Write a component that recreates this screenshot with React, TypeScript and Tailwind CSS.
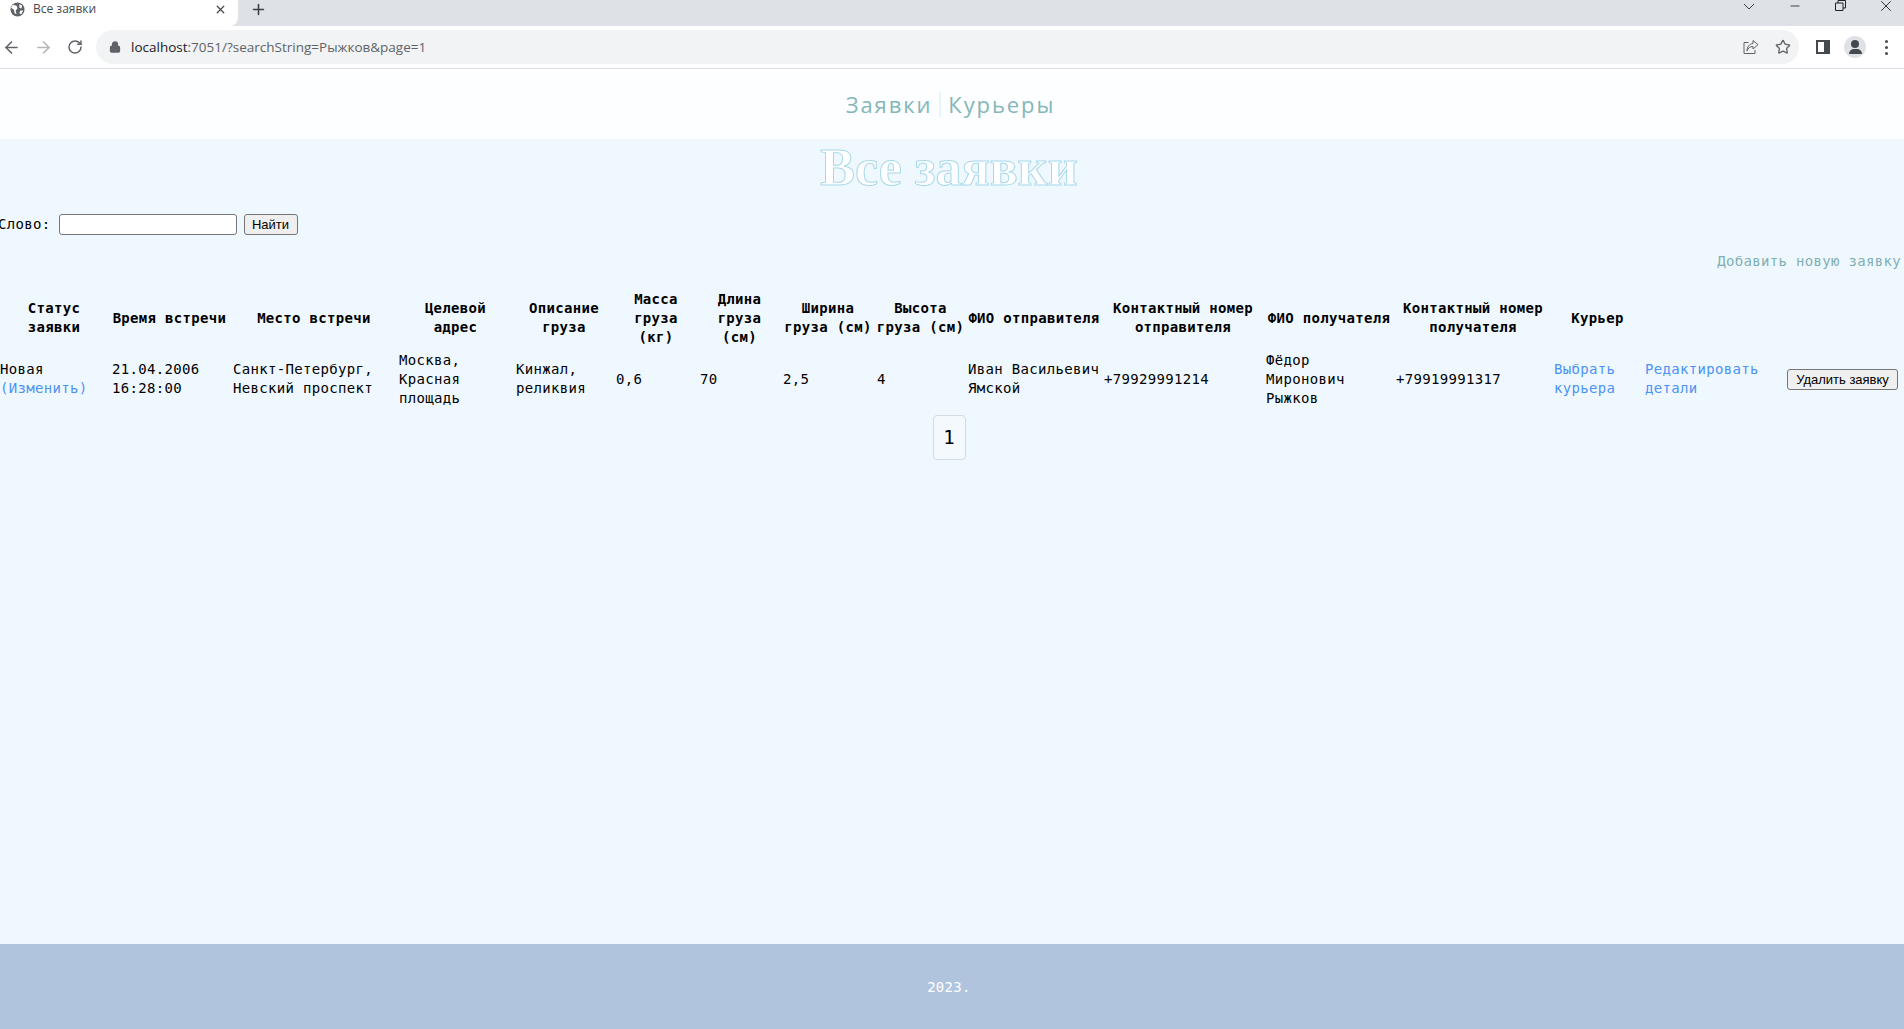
import { ArrowLeft, ArrowRight, RotateCw, Lock, X, Plus, Minus, Star } from "lucide-react";

const mono = "font-['DejaVu_Sans_Mono',monospace] text-[14px] leading-[19px] tracking-[0.32px]";

const headers = [
  "Статус\nзаявки",
  "Время встречи",
  "Место встречи",
  "Целевой\nадрес",
  "Описание\nгруза",
  "Масса\nгруза\n(кг)",
  "Длина\nгруза\n(см)",
  "Ширина\nгруза (см)",
  "Высота\nгруза (см)",
  "ФИО отправителя",
  "Контактный номер\nотправителя",
  "ФИО получателя",
  "Контактный номер\nполучателя",
  "Курьер",
  "",
  "",
];

function BrowserChrome() {
  return (
    <div className="h-[69px] bg-white border-b border-[#dadce0] font-['Open_Sans',sans-serif]">
      <div className="h-[26px] bg-[#dee1e6] flex items-start">
        <div className="w-[238px] h-[26px] bg-white rounded-br-lg flex items-center pl-[10px] pr-[11px] pb-[8px]">
          <svg width="15" height="15" viewBox="0 0 16 16">
            <circle cx="8" cy="8" r="7.5" fill="#5f6368" />
            <path d="M3 3l4 1 1 3-2 2 1 4-2-1-1-4-3-2zM10 2l3 2-1 3-2-1zM11 9l3 0-2 4-2-1z" fill="#fff" />
          </svg>
          <span className="ml-[8px] text-[12px] text-[#45494d] flex-1">Все заявки</span>
          <X size={13} strokeWidth={2.4} className="text-[#45494d]" />
        </div>
        <Plus size={17} strokeWidth={2.2} className="ml-[12px] mt-[1px] text-[#3c4043]" />
        <div className="flex-1" />
        <svg width="12" height="7" viewBox="0 0 12 7" fill="none" stroke="#3c4043" className="mt-[3px] mr-[33px]">
          <path d="M1 1l5 5 5-5" />
        </svg>
        <Minus size={14} strokeWidth={1.4} className="text-[#202124] mr-[33px] mt-[-1px]" />
        <svg width="11" height="11" viewBox="0 0 11 11" fill="none" stroke="#202124" className="mr-[31px] mt-[0px]">
          <path d="M.5 3h7.500v7.500h-7.500zM3 3V.5h7.500V8H8" />
        </svg>
        <X size={18} strokeWidth={1.2} className="text-[#202124] mr-[9px] mt-[-3px]" />
      </div>
      <div className="h-[42px] flex items-center">
        <ArrowLeft size={19} strokeWidth={2} className="ml-[2px] text-[#5f6368]" />
        <ArrowRight size={19} strokeWidth={2} className="ml-[13px] text-[#b4b6b9]" />
        <RotateCw size={16} strokeWidth={2.2} className="ml-[14px] text-[#5f6368]" />
        <div className="ml-[13px] w-[1703px] h-[34px] rounded-full bg-[#f1f3f4] flex items-center pl-[13px] pr-[8px]">
          <Lock size={12} strokeWidth={2.6} className="text-[#5f6368]" fill="#5f6368" />
          <span className="ml-[10px] text-[13.500px] text-[#5f6368] flex-1">
            <span className="text-[#202124]">localhost</span>:7051/?searchString=Рыжков&amp;page=1
          </span>
          <svg width="16" height="16" viewBox="0 0 16 16" fill="none" stroke="#5f6368" strokeWidth="1" className="mr-[16px]">
            <path d="M5.500 3.500H1v11h11V11" />
            <path d="M10 1.500l5 4.200-5 4.300V7.500C7 7.500 5 9 4 12c0-4 2-7 6-7.500z" />
          </svg>
          <Star size={16} strokeWidth={2} className="text-[#5f6368]" />
        </div>
        <div className="ml-[17px] w-[14px] h-[14px] border-[2px] border-r-[6px] border-[#45494d] bg-white" />
        <div className="ml-[14px] w-[22px] h-[22px] rounded-full bg-[#dee1e6] flex flex-col items-center justify-center">
          <div className="w-[8px] h-[8px] rounded-full bg-[#45494d]" />
          <div className="w-[13px] h-[5px] rounded-t-full bg-[#45494d] mt-[1px]" />
        </div>
        <div className="ml-[19px] flex flex-col gap-[3px]">
          <div className="w-[3px] h-[3px] rounded-full bg-[#45494d]" />
          <div className="w-[3px] h-[3px] rounded-full bg-[#45494d]" />
          <div className="w-[3px] h-[3px] rounded-full bg-[#45494d]" />
        </div>
      </div>
    </div>
  );
}

export default function App() {
  return (
    <div className="h-[1029px] overflow-hidden flex flex-col bg-[#f0f8ff] text-black">
      <BrowserChrome />

      <nav className="h-[70px] bg-[#fdfeff] flex items-center justify-center pr-[3px] pt-[1px] font-['Open_Sans',sans-serif] text-[22px] tracking-[1.9px] text-[#84b6ba]">
        <a>Заявки</a>
        <span className="w-[2px] h-[25px] bg-[#e4f6fb] mx-[7px]" />
        <a>Курьеры</a>
      </nav>

      <main className="flex-1">
        <h1 className="text-center pr-[6px] font-['Liberation_Serif',serif] font-bold text-[52px] leading-[58px] text-white [-webkit-text-stroke:1px_#a8d8ea]">
          Все заявки
        </h1>

        <form className={`${mono} flex items-center mt-[17px] -ml-[2px]`}>
          <label>Слово:</label>
          <input className="ml-[8px] w-[178px] h-[21px] bg-white border border-[#767676] rounded-[3px]" />
          <button
            type="button"
            className="ml-[7px] w-[54px] h-[21px] bg-[#efefef] border border-[#767676] rounded-[3px] font-['Liberation_Sans',sans-serif] text-[13px] tracking-normal"
          >
            Найти
          </button>
        </form>

        <div className={`${mono} text-right pr-[3px] mt-[17px] text-[#7fb0b3]`}>Добавить новую заявку</div>

        <table className={`${mono} mt-[15px] w-[1904px] table-fixed border-collapse`}>
          <colgroup>
            <col className="w-[108px]" />
            <col className="w-[123px]" />
            <col className="w-[166px]" />
            <col className="w-[117px]" />
            <col className="w-[100px]" />
            <col className="w-[84px]" />
            <col className="w-[83px]" />
            <col className="w-[94px]" />
            <col className="w-[91px]" />
            <col className="w-[136px]" />
            <col className="w-[162px]" />
            <col className="w-[130px]" />
            <col className="w-[158px]" />
            <col className="w-[91px]" />
            <col className="w-[142px]" />
            <col className="w-[119px]" />
          </colgroup>
          <thead>
            <tr className="h-[64px]">
              {headers.map((h, i) => (
                <th key={i} className="px-[1px] font-bold text-center align-middle whitespace-pre-line">
                  {h}
                </th>
              ))}
            </tr>
          </thead>
          <tbody>
            <tr className="h-[58px]">
              <td className="pr-[2px]">
                Новая
                <br />
                <a className="text-[#4c93f5]">(Изменить)</a>
              </td>
              <td className="pl-[4px] pr-[2px]">
                21.04.2006
                <br />
                16:28:00
              </td>
              <td className="px-[2px]">Санкт-Петербург, Невский проспект</td>
              <td className="px-[2px]">Москва, Красная площадь</td>
              <td className="px-[2px]">Кинжал, реликвия</td>
              <td className="px-[2px]">0,6</td>
              <td className="px-[2px]">70</td>
              <td className="px-[2px]">2,5</td>
              <td className="px-[2px]">4</td>
              <td className="px-[2px]">Иван Васильевич Ямской</td>
              <td className="px-[2px]">+79929991214</td>
              <td className="px-[2px]">Фёдор Миронович Рыжков</td>
              <td className="px-[2px]">+79919991317</td>
              <td className="px-[2px]">
                <a className="text-[#4c93f5]">Выбрать курьера</a>
              </td>
              <td className="px-[2px]">
                <a className="text-[#4c93f5]">Редактировать детали</a>
              </td>
              <td className="px-[2px]">
                <button
                  type="button"
                  className="w-[111px] h-[21px] bg-[#efefef] border border-[#767676] rounded-[3px] font-['Liberation_Sans',sans-serif] text-[13px] tracking-normal"
                >
                  Удалить заявку
                </button>
              </td>
            </tr>
          </tbody>
        </table>

        <div className="flex justify-center pr-[6px] mt-[7px]">
          <a className="w-[33px] h-[45px] flex items-center justify-center border border-[#d5dbe2] rounded-[4px] bg-[#f4f9fe] font-['DejaVu_Sans_Mono',monospace] text-[19px]">
            1
          </a>
        </div>
      </main>

      <footer className={`${mono} h-[85px] bg-[#b0c4de] flex items-center justify-center pr-[6px] pt-[1px] text-white`}>2023.</footer>
    </div>
  );
}
